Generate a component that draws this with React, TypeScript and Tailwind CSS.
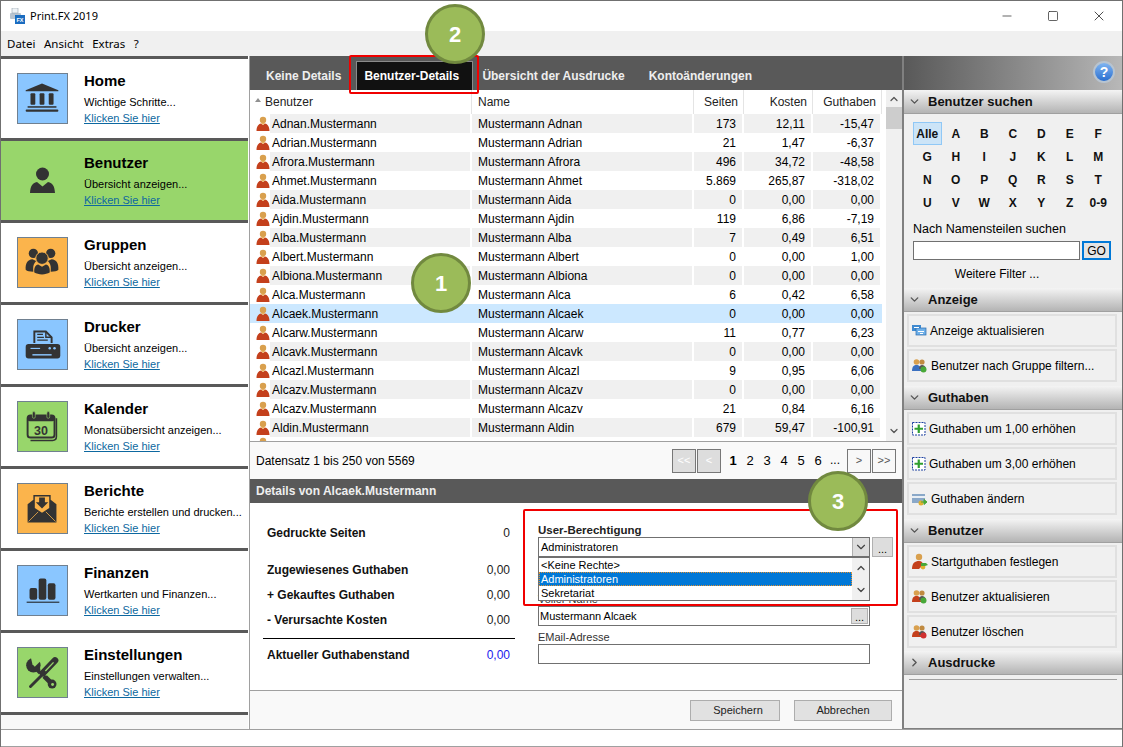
import type { ReactNode } from 'react'
import { ChevronDown, ChevronRight, ChevronUp, Minus, Square, X } from 'lucide-react'

const ink = '#333333'

function HomeIcon() {
  return (
    <svg viewBox="0 0 51 51" className="w-full h-full">
      <path d="M25 10 L42 17 V18 H8 V17 Z" fill={ink} />
      <rect x="13" y="20" width="5" height="12" rx="1" fill={ink} />
      <rect x="22.5" y="20" width="5" height="12" rx="1" fill={ink} />
      <rect x="32" y="20" width="5" height="12" rx="1" fill={ink} />
      <rect x="10" y="33.5" width="30" height="1.6" fill={ink} />
      <rect x="8" y="37" width="34" height="2.2" rx="1" fill={ink} />
    </svg>
  )
}

function PersonIcon() {
  return (
    <svg viewBox="0 0 51 51" className="w-full h-full">
      <circle cx="25.5" cy="19" r="6.5" fill={ink} />
      <path d="M13 38 C13.5 31 15 28.5 20 27 L25.5 31.5 L31 27 C36 28.5 37.5 31 38 38 Z" fill={ink} />
    </svg>
  )
}

function GroupIcon() {
  return (
    <svg viewBox="0 0 51 51" className="w-full h-full">
      <circle cx="16" cy="16" r="4.8" fill={ink} />
      <circle cx="34" cy="16" r="4.8" fill={ink} />
      <path d="M8 33 C7.5 26 10 22.5 15 22 L19 24 C16 27 15.5 30 16 35 C12 35 9.5 34.5 8 33 Z" fill={ink} />
      <path d="M42 33 C42.5 26 40 22.5 35 22 L31 24 C34 27 34.5 30 34 35 C38 35 40.5 34.5 42 33 Z" fill={ink} />
      <circle cx="25" cy="21" r="6.5" fill={ink} stroke="#fbb44c" strokeWidth="1" />
      <path d="M17 36 C16.5 31 18 28 21 27.5 L25 30 L29 27.5 C32 28 33.5 31 33 36 C29 38.5 21 38.5 17 36 Z" fill={ink} />
    </svg>
  )
}

function PrinterIcon() {
  return (
    <svg viewBox="0 0 51 51" className="w-full h-full">
      <path d="M17 24 V12 H29 L35 18 V24" fill="none" stroke={ink} strokeWidth="2" />
      <path d="M29 12 V18 H35" fill="none" stroke={ink} strokeWidth="1.5" />
      <path d="M20 15 H26 M20 18 H27 M20 21 H31" stroke={ink} strokeWidth="1.3" />
      <path d="M11 25 H41 Q44 25 44 28 V37 Q44 40 41 40 H11 Q8 40 8 37 V28 Q8 25 11 25 Z" fill={ink} />
      <rect x="13" y="29" width="10" height="1.2" fill="#8ac6ff" />
      <circle cx="33" cy="29.5" r="1.3" fill="#8ac6ff" />
      <circle cx="38" cy="29.5" r="1.3" fill="#8ac6ff" />
      <rect x="15" y="35.5" width="20" height="1.5" fill="#8ac6ff" />
    </svg>
  )
}

function CalendarIcon() {
  return (
    <svg viewBox="0 0 51 51" className="w-full h-full">
      <rect x="10" y="14" width="28" height="23" rx="3" fill="none" stroke={ink} strokeWidth="2" />
      <path d="M13 40 H36 Q40 40 40 36 V17" fill="none" stroke={ink} strokeWidth="1.6" />
      <rect x="10" y="14" width="28" height="6" rx="2" fill={ink} />
      <rect x="15" y="10" width="3" height="7" rx="1.5" fill={ink} stroke="#98d66b" strokeWidth="0.6" />
      <rect x="30" y="10" width="3" height="7" rx="1.5" fill={ink} stroke="#98d66b" strokeWidth="0.6" />
      <text x="24" y="34" textAnchor="middle" fontSize="13" fontWeight="700" fill={ink} fontFamily="Liberation Sans, sans-serif">30</text>
    </svg>
  )
}

function MailIcon() {
  return (
    <svg viewBox="0 0 51 51" className="w-full h-full">
      <path d="M10 21 L16 16.5 V11.5 H34 V16.5 L40 21 V40 H10 Z" fill={ink} />
      <path d="M17.5 13 H32.5 V25 L25 30 L17.5 25 Z" fill="#fbb44c" />
      <path d="M22 14 H28 V19 H31.5 L25 25.5 L18.5 19 H22 Z" fill={ink} />
      <path d="M11 39 L21 29 M39 39 L29 29" stroke="#fbb44c" strokeWidth="0.8" />
    </svg>
  )
}

function BarsIcon() {
  return (
    <svg viewBox="0 0 51 51" className="w-full h-full">
      <rect x="12" y="23" width="8" height="12" rx="2" fill={ink} />
      <rect x="21.5" y="13" width="8" height="22" rx="2" fill={ink} />
      <rect x="31" y="18" width="8" height="17" rx="2" fill={ink} />
      <rect x="9" y="37" width="34" height="1.5" fill="#3a4a5a" />
    </svg>
  )
}

function ToolsIcon() {
  return (
    <svg viewBox="0 0 51 51" className="w-full h-full">
      <circle cx="16" cy="18" r="7.5" fill={ink} />
      <path d="M15 17 L17.5 19.5 L25 12 L20 6 L13 8 Z" fill="#98d66b" />
      <path d="M18 20 L35.5 37.5" stroke={ink} strokeWidth="5" />
      <circle cx="35.5" cy="37.5" r="4.6" fill={ink} />
      <circle cx="36" cy="38" r="1.5" fill="#98d66b" />
      <path d="M25 28 L13 40" stroke="#98d66b" strokeWidth="5" />
      <path d="M25 28 L13 40" stroke={ink} strokeWidth="3" strokeLinecap="round" />
      <path d="M38.5 13 L26 26" stroke="#98d66b" strokeWidth="9" />
      <path d="M38.5 13 L26 26" stroke={ink} strokeWidth="7" strokeLinecap="round" />
      <path d="M37 15 L28.5 24" stroke="#98d66b" strokeWidth="1.4" />
    </svg>
  )
}

const navItems = [
  { title: 'Home', sub: 'Wichtige Schritte...', bg: 'bg-[#8ac6ff]', icon: <HomeIcon /> },
  { title: 'Benutzer', sub: 'Übersicht anzeigen...', bg: '', icon: <PersonIcon />, active: true },
  { title: 'Gruppen', sub: 'Übersicht anzeigen...', bg: 'bg-[#fbb44c]', icon: <GroupIcon /> },
  { title: 'Drucker', sub: 'Übersicht anzeigen...', bg: 'bg-[#8ac6ff]', icon: <PrinterIcon /> },
  { title: 'Kalender', sub: 'Monatsübersicht anzeigen...', bg: 'bg-[#98d66b]', icon: <CalendarIcon /> },
  { title: 'Berichte', sub: 'Berichte erstellen und drucken...', bg: 'bg-[#fbb44c]', icon: <MailIcon /> },
  { title: 'Finanzen', sub: 'Wertkarten und Finanzen...', bg: 'bg-[#8ac6ff]', icon: <BarsIcon /> },
  { title: 'Einstellungen', sub: 'Einstellungen verwalten...', bg: 'bg-[#98d66b]', icon: <ToolsIcon /> },
]

const rows = [
  ['Adnan', '173', '12,11', '-15,47'],
  ['Adrian', '21', '1,47', '-6,37'],
  ['Afrora', '496', '34,72', '-48,58'],
  ['Ahmet', '5.869', '265,87', '-318,02'],
  ['Aida', '0', '0,00', '0,00'],
  ['Ajdin', '119', '6,86', '-7,19'],
  ['Alba', '7', '0,49', '6,51'],
  ['Albert', '0', '0,00', '1,00'],
  ['Albiona', '0', '0,00', '0,00'],
  ['Alca', '6', '0,42', '6,58'],
  ['Alcaek', '0', '0,00', '0,00'],
  ['Alcarw', '11', '0,77', '6,23'],
  ['Alcavk', '0', '0,00', '0,00'],
  ['Alcazl', '9', '0,95', '6,06'],
  ['Alcazv', '0', '0,00', '0,00'],
  ['Alcazv', '21', '0,84', '6,16'],
  ['Aldin', '679', '59,47', '-100,91'],
]

const alphabet = [
  ['Alle', 'A', 'B', 'C', 'D', 'E', 'F'],
  ['G', 'H', 'I', 'J', 'K', 'L', 'M'],
  ['N', 'O', 'P', 'Q', 'R', 'S', 'T'],
  ['U', 'V', 'W', 'X', 'Y', 'Z', '0-9'],
]

function UserGlyph() {
  return (
    <svg viewBox="0 0 14 16" className="w-[14px] h-[16px] shrink-0">
      <circle cx="7" cy="4" r="3.2" fill="#d9a04e" />
      <path d="M0.5 15 C0.5 10 3 8 5 7.6 L7 9 L9 7.6 C11 8 13.5 10 13.5 15 Z" fill="#c4401c" />
      <path d="M5 7.6 L7 9 L9 7.6 L8 6.8 H6 Z" fill="#e8b060" />
    </svg>
  )
}

function Row({ row, i }: { row: string[]; i: number }) {
  const selected = row[0] === 'Alcaek'
  const shade = selected ? 'bg-[#cce8ff]' : i % 2 === 0 ? 'bg-[#f0f0f0]' : 'bg-white'
  return (
    <div className={`flex h-[19px] w-[632px] items-center text-[12px] leading-[21px] ${selected ? 'bg-[#cce8ff]' : ''}`}>
      <div className="w-[20px] pl-[6px] shrink-0">
        <UserGlyph />
      </div>
      <div className={`h-[19px] w-[200px] pl-[2px] ${shade}`}>{row[0]}.Mustermann</div>
      <div className={`h-[19px] w-[220px] ml-[2px] pl-[6px] ${shade}`}>Mustermann {row[0]}</div>
      <div className={`h-[19px] w-[48px] ml-[2px] pr-[6px] text-right ${shade}`}>{row[1]}</div>
      <div className={`h-[19px] w-[67px] ml-[2px] pr-[6px] text-right ${shade}`}>{row[2]}</div>
      <div className={`h-[19px] w-[67px] ml-[2px] pr-[6px] text-right ${shade}`}>{row[3]}</div>
    </div>
  )
}

function NavItem({ item }: { item: (typeof navItems)[number] }) {
  return (
    <div className={`flex h-[79px] pl-[16px] ${item.active ? 'bg-[#98d66b]' : 'bg-white'}`}>
      <div className={`mt-[14px] w-[51px] h-[51px] shrink-0 ${item.active ? '' : `${item.bg} border border-[#708090]`}`}>
        {item.icon}
      </div>
      <div className="ml-[16px] mt-[13px]">
        <div className="text-[15px] font-bold leading-[18px] text-black">{item.title}</div>
        <div className="mt-[4px] text-[11px] leading-[16px] whitespace-nowrap text-black">{item.sub}</div>
        <div className="text-[11px] leading-[16px] text-[#0d68a0] underline">Klicken Sie hier</div>
      </div>
    </div>
  )
}

function SectionHead({ title, open = true }: { title: string; open?: boolean }) {
  return (
    <div className="flex items-center h-[24px] bg-gradient-to-b from-[#f4f4f4] to-[#b4b4b4] border-b border-[#a0a0a0] pl-[4px]">
      {open ? (
        <ChevronDown size={13} strokeWidth={2.5} className="text-[#555555]" />
      ) : (
        <ChevronRight size={13} strokeWidth={2.5} className="text-[#555555]" />
      )}
      <span className="ml-[7px] text-[13px] font-bold text-[#111111]">{title}</span>
    </div>
  )
}

function ActionBtn({ icon, label, indent = 'ml-[3px]' }: { icon: ReactNode; label: string; indent?: string }) {
  return (
    <div className="flex items-center h-[33px] ml-[3px] mr-[5px] border-2 border-[#e0e0e0] pl-[2px] text-[12px] text-black">
      <div className="w-[17px] h-[17px] shrink-0">{icon}</div>
      <span className={indent}>{label}</span>
    </div>
  )
}

function PlusBox() {
  return (
    <svg viewBox="0 0 17 17" className="w-full h-full">
      <rect x="1.5" y="2.5" width="12.5" height="12.5" fill="#fff" stroke="#1a3fa0" strokeDasharray="2 1" />
      <path d="M7.75 4.5 V13 M3.5 8.75 H12" stroke="#2f9e2f" strokeWidth="2.2" />
    </svg>
  )
}

function RefreshGlyph() {
  return (
    <svg viewBox="0 0 17 17" className="w-full h-full">
      <rect x="1" y="3" width="9" height="6" fill="#3f8ad0" />
      <rect x="5" y="6" width="10" height="7" fill="#6fb0e8" stroke="#2a6cb0" strokeWidth="0.7" />
      <path d="M3 5.5 H8 M7 9.5 H13 M9 11.5 H12" stroke="#fff" strokeWidth="1" />
    </svg>
  )
}

function PeopleGlyph({ badge, tone = '#3a70c0' }: { badge: string; tone?: string }) {
  return (
    <svg viewBox="0 0 17 17" className="w-full h-full">
      <circle cx="5.5" cy="5" r="2.8" fill="#d9a04e" />
      <path d="M1 14 C1 9.5 3 8 5.5 8 C8 8 10 9.5 10 14 Z" fill={tone} />
      <circle cx="11" cy="5" r="2.6" fill="#c08a40" />
      <path d="M8 12 C8 9 9.5 8 11 8 C13 8 14.5 9 15 12 Z" fill="#555555" />
      <circle cx="12.5" cy="12.5" r="3" fill={badge} />
    </svg>
  )
}

function CardGlyph() {
  return (
    <svg viewBox="0 0 17 17" className="w-full h-full">
      <rect x="1" y="4" width="13" height="9" fill="#8aa8c8" />
      <rect x="1" y="6" width="13" height="2" fill="#e8eef4" />
      <circle cx="10" cy="13" r="2.5" fill="#e0b030" />
      <path d="M10 12 H15 M13 9.5 L16 12 L13 14.5 Z" fill="#48a838" stroke="#48a838" />
    </svg>
  )
}

function StartGlyph() {
  return (
    <svg viewBox="0 0 17 17" className="w-full h-full">
      <circle cx="8" cy="4" r="3.2" fill="#d9a04e" />
      <path d="M1 16 C1 10 4 8 8 8 C11 8 12 10 12 12 L8 16 Z" fill="#c4401c" />
      <circle cx="12" cy="14" r="2.4" fill="#e0b030" />
      <path d="M10 10 H15 L17 12 L14 13 H10 Z" fill="#48a838" />
    </svg>
  )
}

function PageBtn({ label, off }: { label: string; off?: boolean }) {
  return (
    <div
      className={`flex items-center justify-center w-[24px] h-[24px] border border-[#777777] text-[11px] ${
        off ? 'bg-[#dddddd] text-white' : 'bg-[#f8f8f8] text-[#555555]'
      }`}
    >
      {label}
    </div>
  )
}

function StatLine({ label, value, cls = 'mt-[9px]', blue }: { label: string; value: string; cls?: string; blue?: boolean }) {
  return (
    <div className={`flex justify-between h-[16px] items-center pl-[4px] pr-[5px] ${cls}`}>
      <span className="text-[12px] font-bold text-[#111111]">{label}</span>
      <span className={`text-[12px] ${blue ? 'text-[#1a1aee]' : 'text-[#222222]'}`}>{value}</span>
    </div>
  )
}

function Badge({ n, cls }: { n: string; cls: string }) {
  return (
    <div className={`absolute w-[60px] h-[60px] rounded-full bg-[#9bbb59] border-[3px] border-[#71893f] flex items-center justify-center text-white text-[22px] font-bold ${cls}`}>
      {n}
    </div>
  )
}

export default function App() {
  return (
    <div className="relative w-[1123px] h-[747px] overflow-hidden bg-white font-['Liberation_Sans',sans-serif] text-black border-t border-x border-[#707070]">
      <div className="flex items-center h-[30px] pl-[9px] font-['Noto_Sans',sans-serif] text-[11px]">
        <svg viewBox="0 0 16 16" className="w-[16px] h-[16px]">
          <rect x="0" y="5" width="11" height="6" rx="1" fill="#b8c4d0" />
          <path d="M2 0 H8 V5 H2 Z" fill="#eef2f6" stroke="#98a4b0" strokeWidth="0.6" />
          <rect x="5" y="7" width="10" height="9" fill="#1a6cc0" />
          <text x="10" y="14" textAnchor="middle" fontSize="5.5" fontWeight="700" fill="#fff" fontFamily="Liberation Sans, sans-serif">FX</text>
        </svg>
        <span className="ml-[4px]">Print.FX 2019</span>
        <div className="ml-auto flex items-center text-[#222222]">
          <div className="w-[46px] flex justify-center"><Minus size={14} strokeWidth={1.2} /></div>
          <div className="w-[46px] flex justify-center"><Square size={12} strokeWidth={1.4} /></div>
          <div className="w-[46px] flex justify-center"><X size={16} strokeWidth={1.2} /></div>
        </div>
      </div>
      <div className="flex items-center h-[25px] bg-[#f0f0f0] pl-[6px] gap-[8.5px] font-['Noto_Sans',sans-serif] text-[11.5px]">
        <span>Datei</span>
        <span>Ansicht</span>
        <span>Extras</span>
        <span>?</span>
      </div>

      <div className="flex h-[673px]">
        <div className="w-[247px] shrink-0 bg-[#f8f8f8]">
          <div className="h-[3px] bg-[#595959]" />
          {navItems.map((item) => (
            <div key={item.title}>
              <NavItem item={item} />
              <div className="h-[3px] bg-[#595959]" />
            </div>
          ))}
        </div>
        <div className="w-px ml-px bg-[#a0a0a0]" />

        <div className="w-[652px] shrink-0 flex flex-col">
          <div className="flex items-end h-[34px] bg-[#595959] text-[12px] font-bold text-[#eeeeee]">
            <span className="ml-[16px] mb-[5px]">Keine Details</span>
            <div className="ml-[15px] flex items-center h-[29px] w-[117px] pl-[7px] bg-[#111111] border border-b-0 border-[#8a8a8a] text-white">
              Benutzer-Details
            </div>
            <span className="ml-[9px] mb-[5px]">Übersicht der Ausdrucke</span>
            <span className="ml-[24px] mb-[5px]">Kontoänderungen</span>
          </div>

          <div className="flex h-[352px] border-b border-[#a0a0a0]">
            <div className="w-[636px] flex flex-col">
              <div className="flex h-[24px] items-center text-[12px] text-[#222222]">
                <div className="w-[222px] pl-[5px] flex items-center border-r border-[#e4e4e4] h-full">
                  <svg viewBox="0 0 6 4" className="w-[6px] h-[4px] mb-[4px]"><path d="M3 0 L6 4 H0 Z" fill="#909090" /></svg>
                  <span className="ml-[4px]">Benutzer</span>
                </div>
                <div className="w-[222px] pl-[6px] h-full flex items-center border-r border-[#e4e4e4]">Name</div>
                <div className="w-[50px] pr-[5px] h-full flex items-center justify-end border-r border-[#e4e4e4]">Seiten</div>
                <div className="w-[69px] pr-[5px] h-full flex items-center justify-end border-r border-[#e4e4e4]">Kosten</div>
                <div className="w-[69px] pr-[5px] h-full flex items-center justify-end border-r border-[#e4e4e4]">Guthaben</div>
              </div>
              <div className="h-[327px] overflow-hidden">
                {rows.map((row, i) => (
                  <Row key={i} row={row} i={i} />
                ))}
                <div className="pl-[6px]"><UserGlyph /></div>
              </div>
            </div>
            <div className="w-[16px] bg-[#f0f0f0] flex flex-col items-center">
              <ChevronUp size={12} strokeWidth={2.5} className="mt-[3px] text-[#555555]" />
              <div className="mt-[2px] w-full h-[22px] bg-[#cdcdcd]" />
              <ChevronDown size={12} strokeWidth={2.5} className="mt-auto mb-[4px] text-[#555555]" />
            </div>
          </div>

          <div className="flex items-center h-[37px] bg-[#f9f9f9] pl-[6px] pr-[6px] text-[12px]">
            <span>Datensatz 1 bis 250 von 5569</span>
            <div className="ml-auto flex items-center">
              <PageBtn label="<<" off />
              <div className="ml-px"><PageBtn label="<" off /></div>
              <div className="flex w-[126px] pl-[3.5px] text-[13px] text-center">
                <span className="w-[17px] font-bold">1</span>
                <span className="w-[17px]">2</span>
                <span className="w-[17px]">3</span>
                <span className="w-[17px]">4</span>
                <span className="w-[17px]">5</span>
                <span className="w-[17px]">6</span>
                <span className="w-[17px] text-[12px]">...</span>
              </div>
              <PageBtn label=">" />
              <div className="ml-px"><PageBtn label=">>" /></div>
            </div>
          </div>

          <div className="flex items-center h-[24px] bg-[#595959] pl-[6px] text-[12px] font-bold text-[#eeeeee]">
            Details von Alcaek.Mustermann
          </div>

          <div className="flex h-[188px] border-b border-[#a0a0a0] pt-[22px]">
            <div className="w-[252px] ml-[13px] shrink-0">
              <StatLine label="Gedruckte Seiten" value="0" cls="mt-0" />
              <StatLine label="Zugewiesenes Guthaben" value="0,00" cls="mt-[21px]" />
              <StatLine label="+ Gekauftes Guthaben" value="0,00" />
              <StatLine label="- Verursachte Kosten" value="0,00" />
              <div className="h-px mt-[10px] bg-black" />
              <StatLine label="Aktueller Guthabenstand" value="0,00" cls="mt-[8px]" blue />
            </div>
            <div className="relative ml-[23px] w-[355px] text-[11px]">
              <div className="h-[12px] leading-[12px] -mt-[1px] font-bold text-[#222222] text-[11.5px]">User-Berechtigung</div>
              <div className="flex mt-[1px]">
                <div className="flex items-center w-[332px] h-[20px] border border-[#707070] pl-[2px]">
                  Administratoren
                  <div className="ml-auto h-full w-[17px] bg-[#dddddd] border-l border-[#b0b0b0] flex items-center justify-center">
                    <ChevronDown size={14} className="text-[#444444]" />
                  </div>
                </div>
                <div className="ml-[2px] w-[21px] h-[20px] bg-[#dddddd] border border-[#b0b0b0] flex items-end justify-center text-[11px] leading-[14px]">...</div>
              </div>
              <div className="mt-[35px] h-[14px] leading-[14px] text-[#333333]">Voller Name</div>
              <div className="flex items-center w-[332px] h-[20px] border border-[#707070] pl-px">
                Mustermann Alcaek
                <div className="ml-auto mr-px h-[16px] w-[17px] bg-[#dddddd] border border-[#b0b0b0] flex items-end justify-center leading-[12px]">...</div>
              </div>
              <div className="mt-[4px] h-[14px] leading-[14px] text-[#333333]">EMail-Adresse</div>
              <div className="w-[332px] h-[20px] border border-[#707070]" />

              <div className="absolute left-0 top-[32px] w-[332px] h-[44px] bg-white border border-[#707070]">
                <div className="flex h-full">
                  <div className="w-[314px] flex flex-col leading-[14px]">
                    <div className="pl-[2px] h-[14px]">{'<Keine Rechte>'}</div>
                    <div className="pl-[2px] h-[14px] bg-[#0078d7] text-white outline-1 outline-dotted outline-[#e09030] -outline-offset-1">Administratoren</div>
                    <div className="pl-[2px] h-[14px]">Sekretariat</div>
                  </div>
                  <div className="ml-auto w-[17px] bg-[#f0f0f0] flex flex-col items-center justify-between py-[4px]">
                    <ChevronUp size={12} strokeWidth={2.5} className="text-[#444444]" />
                    <ChevronDown size={12} strokeWidth={2.5} className="text-[#444444]" />
                  </div>
                </div>
              </div>
            </div>
          </div>

          <div className="flex items-center justify-end h-[38px] bg-[#f9f9f9] pr-[10px] gap-[14px] text-[11px] text-[#222222]">
            <div className="flex items-center justify-center w-[90px] h-[21px] pl-[6px] bg-[#e1e1e1] border border-[#adadad]">Speichern</div>
            <div className="flex items-center justify-center w-[98px] h-[21px] bg-[#e1e1e1] border border-[#adadad]">Abbrechen</div>
          </div>
        </div>

        <div className="w-[220px] shrink-0 border-l-2 border-b border-[#808080] bg-[#f0f0f0]">
          <div className="flex items-start justify-end h-[34px] bg-gradient-to-r from-[#595959] to-[#b8b8b8] pr-[7px] pt-[5px]">
            <div className="w-[22px] h-[22px] rounded-full bg-gradient-to-b from-[#7fb4f0] to-[#2a6fd0] border-2 border-[#b8c4d0] flex items-center justify-center text-white text-[14px] font-bold">?</div>
          </div>

          <SectionHead title="Benutzer suchen" />
          <div className="h-[174px] pt-[8px] pl-[9px] text-[12px]">
            {alphabet.map((line) => (
              <div key={line[0]} className="flex h-[23px] font-bold text-[#111111]">
                {line.map((c) => (
                  <div
                    key={c}
                    className={`flex items-center justify-center w-[28.5px] ${c === 'Alle' ? 'bg-[#cce4f7] border border-[#90c8f6]' : ''}`}
                  >
                    {c}
                  </div>
                ))}
              </div>
            ))}
            <div className="mt-[8px] text-[12.5px] leading-[14px]">Nach Namensteilen suchen</div>
            <div className="flex mt-[5px]">
              <div className="w-[167px] h-[19px] bg-white border border-[#707070]" />
              <div className="ml-[2px] w-[29px] h-[19px] flex items-center justify-center bg-[#e4e4e4] border-2 border-[#0078d7]">GO</div>
            </div>
            <div className="mt-[5px] w-[168px] text-center">Weitere Filter ...</div>
          </div>

          <SectionHead title="Anzeige" />
          <div className="pt-[2px] flex flex-col gap-[2px] h-[74px]">
            <ActionBtn icon={<RefreshGlyph />} label="Anzeige aktualisieren" indent="ml-[2px]" />
            <ActionBtn icon={<PeopleGlyph badge="#48a838" />} label="Benutzer nach Gruppe filtern..." />
          </div>

          <SectionHead title="Guthaben" />
          <div className="pt-[2px] flex flex-col gap-[2px] h-[109px]">
            <ActionBtn icon={<PlusBox />} label="Guthaben um 1,00 erhöhen" indent="ml-[1px]" />
            <ActionBtn icon={<PlusBox />} label="Guthaben um 3,00 erhöhen" indent="ml-[1px]" />
            <ActionBtn icon={<CardGlyph />} label="Guthaben ändern" />
          </div>

          <SectionHead title="Benutzer" />
          <div className="pt-[2px] flex flex-col gap-[2px] h-[108px]">
            <ActionBtn icon={<StartGlyph />} label="Startguthaben festlegen" />
            <ActionBtn icon={<PeopleGlyph badge="#48a838" tone="#c4401c" />} label="Benutzer aktualisieren" />
            <ActionBtn icon={<PeopleGlyph badge="#d03030" tone="#c4401c" />} label="Benutzer löschen" />
          </div>

          <SectionHead title="Ausdrucke" open={false} />
          <div className="h-px mx-[5px] mt-[4px] bg-[#a0a0a0]" />
        </div>
      </div>

      <div className="h-[18px] border-y border-[#a0a0a0] bg-white" />

      <div className="absolute left-[348px] top-[54px] w-[130px] h-[39px] border-2 border-[#f00000] rounded-[2px]" />
      <div className="absolute left-[522px] top-[508px] w-[375px] h-[97px] border-2 border-[#f00000] rounded-[2px]" />
      <Badge n="2" cls="left-[424px] top-[3px]" />
      <Badge n="1" cls="left-[410px] top-[252px]" />
      <Badge n="3" cls="left-[807px] top-[470px]" />
    </div>
  )
}
